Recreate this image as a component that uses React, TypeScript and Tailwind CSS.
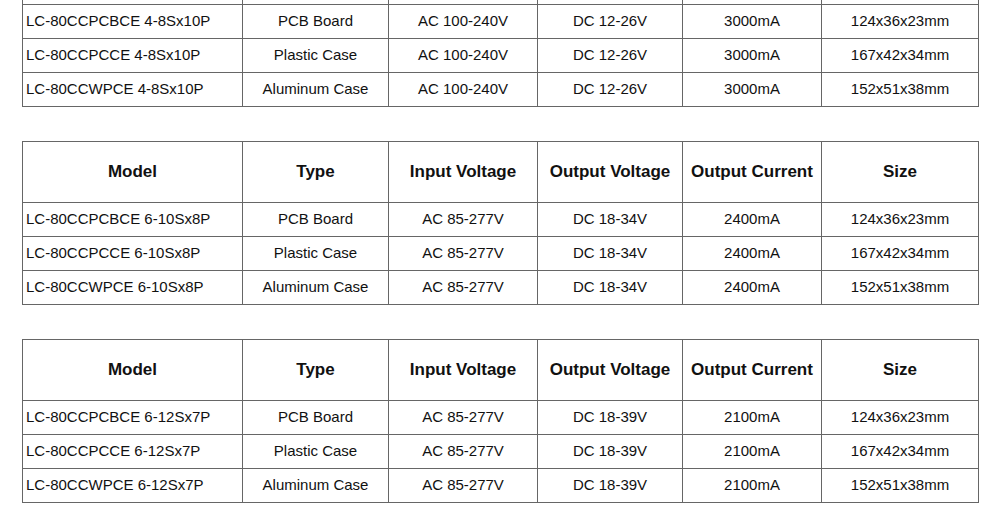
import React from "react";

interface Row {
  model: string;
  type: string;
  input: string;
  output: string;
  current: string;
  size: string;
}

const sizes = ["124x36x23mm", "167x42x34mm", "152x51x38mm"];
const types = ["PCB Board", "Plastic Case", "Aluminum Case"];
const codes = ["CCPCBCE", "CCPCCE", "CCWPCE"];

const makeRows = (suffix: string, input: string, output: string, current: string): Row[] =>
  codes.map((c, i) => ({
    model: `LC-80${c} ${suffix}`,
    type: types[i],
    input,
    output,
    current,
    size: sizes[i],
  }));

const tables: Row[][] = [
  makeRows("4-8Sx10P", "AC 100-240V", "DC 12-26V", "3000mA"),
  makeRows("6-10Sx8P", "AC 85-277V", "DC 18-34V", "2400mA"),
  makeRows("6-12Sx7P", "AC 85-277V", "DC 18-39V", "2100mA"),
];

const headers = ["Model", "Type", "Input Voltage", "Output Voltage", "Output Current", "Size"];
const widths = ["w-[220px]", "w-[146px]", "w-[149px]", "w-[145px]", "w-[139px]", "w-[157px]"];

const SpecTable = ({ rows, showHeader }: { rows: Row[]; showHeader: boolean }) => (
  <table className="w-[957px] table-fixed border-collapse border border-[#666] text-[15px] text-[#111]">
    <colgroup>
      {widths.map((w, i) => (
        <col key={i} className={w} />
      ))}
    </colgroup>
    <thead>
      <tr className="h-[61px]">
        {headers.map((h) => (
          <th key={h} className="border border-[#666] p-0 text-center text-[17px] font-bold">
            {showHeader ? h : ""}
          </th>
        ))}
      </tr>
    </thead>
    <tbody>
      {rows.map((r) => (
        <tr key={r.model} className="h-[34px]">
          <td className="border border-[#666] py-0 pl-[3px] text-left">{r.model}</td>
          <td className="border border-[#666] p-0 text-center">{r.type}</td>
          <td className="border border-[#666] p-0 text-center">{r.input}</td>
          <td className="border border-[#666] p-0 text-center">{r.output}</td>
          <td className="border border-[#666] p-0 text-center">{r.current}</td>
          <td className="border border-[#666] p-0 text-center">{r.size}</td>
        </tr>
      ))}
    </tbody>
  </table>
);

export default function App() {
  return (
    <div className="h-[517px] w-[1000px] overflow-hidden bg-white font-['Liberation_Sans',Arial,sans-serif]">
      <div className="-mt-[57px] flex flex-col gap-[34px] pl-[22px]">
        {tables.map((rows, i) => (
          <SpecTable key={i} rows={rows} showHeader={i > 0} />
        ))}
      </div>
    </div>
  );
}
